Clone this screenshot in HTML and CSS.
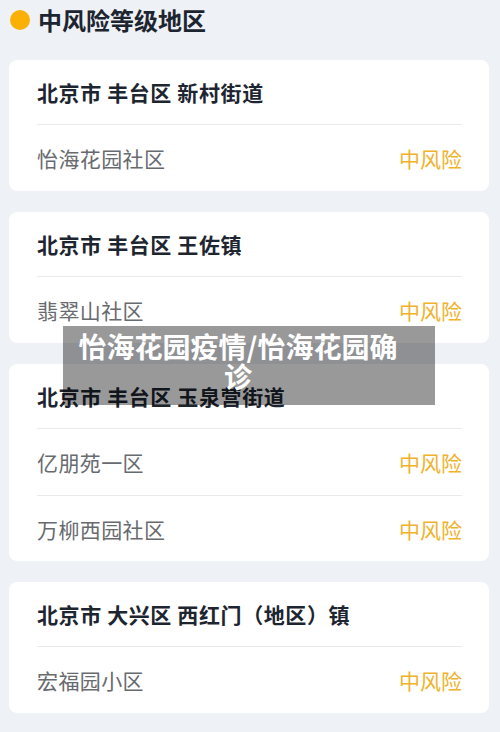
FILE: index.html
```html
<!DOCTYPE html>
<html>
<head>
    <title>中风险等级地区</title>
    <link rel="stylesheet" href="styles.css">
</head>
<body>
    <div class="page">
        <!-- Section title -->
        <div class="header">
            <span class="dot"></span>
            <h1>中风险等级地区</h1>
        </div>

        <div class="card">
            <div class="card-head">北京市 丰台区 新村街道</div>
            <div class="row"><span>怡海花园社区</span><span class="level">中风险</span></div>
        </div>

        <div class="card">
            <div class="card-head">北京市 丰台区 王佐镇</div>
            <div class="row"><span>翡翠山社区</span><span class="level">中风险</span></div>
        </div>

        <div class="card">
            <div class="card-head">北京市 丰台区 玉泉营街道</div>
            <div class="row"><span>亿朋苑一区</span><span class="level">中风险</span></div>
            <div class="row"><span>万柳西园社区</span><span class="level">中风险</span></div>
        </div>

        <div class="card">
            <div class="card-head">北京市 大兴区 西红门（地区）镇</div>
            <div class="row"><span>宏福园小区</span><span class="level">中风险</span></div>
        </div>
    </div>

    <!-- Caption box laid over the list -->
    <div class="caption">怡海花园疫情/怡海花园确诊</div>
</body>
</html>
```

FILE: styles.css
```css
body {
    margin: 0;
    padding: 0;
    background: #eef1f5;
    font-family: "Noto Sans CJK SC", "Noto Sans", sans-serif;
    color: #1d2530;
}

.page {
    padding: 0 11px 0 9px;
}

/* Title line with the orange dot */
.header {
    display: flex;
    align-items: center;
    gap: 8px;
    height: 40px;
    padding-left: 1px;
    margin-bottom: 20px;
}

.dot {
    width: 20px;
    height: 20px;
    border-radius: 50%;
    background: #fbb006;
}

h1 {
    margin: 0;
    font-size: 24px;
    line-height: 30px;
    font-weight: bold;
}

/* Cards */
.card {
    background: #fff;
    border-radius: 8px;
    padding: 0 27px 0 28px;
    margin-bottom: 21px;
}

.card-head {
    height: 64px;
    display: flex;
    align-items: center;
    font-size: 21px;
    font-weight: bold;
    letter-spacing: 0.6px;
    border-bottom: 1px solid #e9eaec;
}

.row {
    height: 66px;
    display: flex;
    align-items: center;
    justify-content: space-between;
    font-size: 21px;
    color: #676a6e;
}

.row span:first-child {
    letter-spacing: 0.4px;
}

.row + .row {
    border-top: 1px solid #e9eaec;
    height: 65px;
}

.level {
    color: #f0b22c;
}

/* Grey caption box */
.caption {
    position: absolute;
    left: 63px;
    top: 326px;
    width: 372px;
    height: 79px;
    box-sizing: border-box;
    padding: 5px 36px 0 14px;
    background: rgba(0, 0, 0, 0.4);
    color: #fff;
    font-size: 28px;
    line-height: 30px;
    font-weight: bold;
    text-align: center;
}
```
